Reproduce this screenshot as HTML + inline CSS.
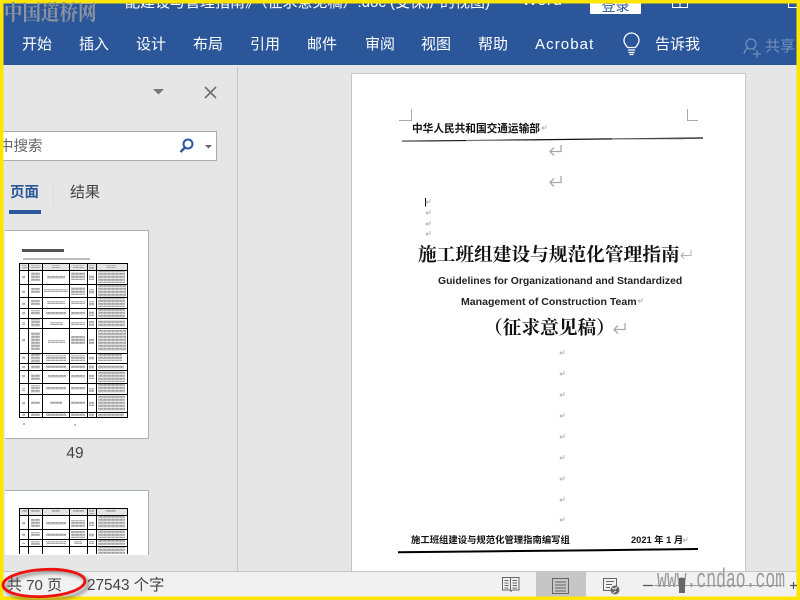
<!DOCTYPE html>
<html><head><meta charset="utf-8"><style>
html,body{margin:0;padding:0;width:800px;height:600px;overflow:hidden;background:#e6e6e6}
body{position:relative;font-family:"Liberation Sans","Noto Sans CJK SC",sans-serif}
.a{position:absolute;white-space:nowrap}
.tab{position:absolute;top:35px;font-size:15px;line-height:20px;color:#fff;white-space:nowrap}
.s{font-family:"Noto Serif CJK SC","Liberation Serif",serif;font-weight:700;color:#111}
svg{position:absolute;left:0;top:0}
</style></head><body>
<div class="a" style="left:0;top:0;width:800px;height:65px;background:#2b579a"></div>
<div class="a" style="left:125px;top:-7px;font-size:15px;line-height:20px;color:#fff">配建设与管理指南》（征求意见稿）.doc (受保护的视图)</div>
<div class="a" style="left:522px;top:-9px;font-size:16px;line-height:20px;letter-spacing:.6px;color:#fff">Word</div>
<div class="a" style="left:590px;top:0;width:51px;height:14px;background:#fff;border-radius:1px;overflow:hidden;text-align:center;font-size:14px;line-height:12px;color:#2b579a">登录</div>
<div class="tab" style="left:22px">开始</div><div class="tab" style="left:79px">插入</div><div class="tab" style="left:136px">设计</div><div class="tab" style="left:193px">布局</div><div class="tab" style="left:250px">引用</div><div class="tab" style="left:307px">邮件</div><div class="tab" style="left:365px">审阅</div><div class="tab" style="left:421px">视图</div><div class="tab" style="left:478px">帮助</div><div class="tab" style="left:535px;letter-spacing:1.1px">Acrobat</div><div class="tab" style="left:655px">告诉我</div><div class="tab" style="left:765px;color:#7391bd;top:37px">共享</div>

<!-- search pane -->
<div class="a" style="left:-10px;top:131px;width:225px;height:28px;background:#fff;border:1px solid #ababab"></div>
<div class="a" style="left:-1px;top:137px;font-size:14.5px;line-height:20px;color:#666">中搜索</div>
<div class="a" style="left:10px;top:183px;font-size:14.5px;line-height:20px;font-weight:700;color:#2b579a">页面</div>
<div class="a" style="left:9px;top:210px;width:32px;height:4px;background:#2b579a"></div>
<div class="a" style="left:53px;top:180px;width:1px;height:25px;background:#dcdcdc"></div>
<div class="a" style="left:70px;top:183px;font-size:15px;line-height:20px;color:#444">结果</div>
<div class="a" style="left:5px;top:230px;width:143px;height:207px;background:#fff;border:solid #abafb8;border-width:1px 1px 1px 0"></div>
<div class="a" style="left:5px;top:490px;width:143px;height:64px;background:#fff;border:solid #abafb8;border-width:1px 1px 0 0;overflow:hidden"></div>
<div class="a" style="left:50px;top:444px;width:50px;text-align:center;font-size:15.5px;line-height:20px;color:#444">49</div>
<div class="a" style="left:237px;top:67px;width:1px;height:504px;background:#c6c6c6"></div>

<!-- document page -->
<div class="a" style="left:351px;top:73px;width:393px;height:498px;background:#fff;border:1px solid #c6c6c6;border-bottom:0"></div>
<div class="a" style="left:412px;top:121px;font-size:10.67px;line-height:16px;font-weight:700;color:#111">中华人民共和国交通运输部</div>
<div class="a s" style="left:418px;top:241px;font-size:18.7px;line-height:26px">施工班组建设与规范化管理指南</div>
<div class="a" style="left:438px;top:275px;font-size:10.4px;line-height:14px;font-weight:700;color:#222">Guidelines for Organizationand and Standardized</div>
<div class="a" style="left:461px;top:295px;font-size:10.55px;line-height:14px;font-weight:700;color:#222">Management of Construction Team</div>
<div class="a s" style="left:484px;top:314px;font-size:18.7px;line-height:26px">（征求意见稿）</div>
<div class="a" style="left:411px;top:533px;font-size:9.35px;line-height:15px;font-weight:700;color:#111">施工班组建设与规范化管理指南编写组</div>
<div class="a" style="left:631px;top:533px;font-size:9.3px;line-height:15px;font-weight:700;color:#111">2021 年 1 月</div>

<!-- status bar -->
<div class="a" style="left:0;top:571px;width:800px;height:29px;background:#f1f1f1;border-top:1px solid #c6c6c6;box-sizing:border-box"></div>
<div class="a" style="left:536px;top:572px;width:50px;height:26px;background:#c6c6c6"></div>
<div class="a" style="left:7px;top:576px;font-size:15px;line-height:20px;color:#444">共 70 页</div>
<div class="a" style="left:87px;top:576px;font-size:15.3px;line-height:20px;color:#444">27543 个字</div>
<div class="a" style="left:657px;top:565px;font-family:'Liberation Mono',monospace;font-size:27px;line-height:32px;color:#9a9a9a;transform:scaleX(.608);transform-origin:0 50%">www.cndao.com</div>

<svg width="800" height="600" viewBox="0 0 800 600" fill="none">
<defs>
<filter id="b" x="-20%" y="-40%" width="140%" height="180%"><feGaussianBlur stdDeviation="1.6"/></filter>
<pattern id="t" width="4" height="3" patternUnits="userSpaceOnUse"><rect width="4" height="3" fill="#e4e4e4"/><rect width="4" height="1.700" fill="#a2a2a2"/><rect x="2.500" width="1" height="1.700" fill="#cfcfcf"/></pattern>
<g id="r"><path d="M11 0V5.500H1M4 2.500 1 5.500l3 3" stroke="#b0b0b0" stroke-width="1"/></g>
<g id="rb"><path d="M12 0V6.500H1M5 2.500 1 6.500l4 4" stroke="#a8a8a8" stroke-width="1.300"/></g>
<g id="rs"><path d="M5 0V3H1M2.500 1.500 1 3l1.500 1.500" stroke="#b5b5b5" stroke-width=".9"/></g>
</defs>
<!-- yellow border -->
<path d="M1.750 1.750H798.250V598.250H1.750Z" stroke="#ffe600" stroke-width="3.500"/>
<!-- close etc -->
<path d="M153 89h11l-5.500 5.500z" fill="#777"/>
<path d="M205 87l11 11M216 87l-11 11" stroke="#6e6e6e" stroke-width="1.600"/>
<circle cx="188" cy="144" r="4.500" stroke="#2b579a" stroke-width="2"/><path d="M184.500 148l-4 4" stroke="#2b579a" stroke-width="2.400"/>
<path d="M205 145h7l-3.500 3.500z" fill="#666"/>
<path d="M672.500 8V3M672.500 7.500h15V3M680 3v4" stroke="#fff"/>
<path d="M788.500 8V3M788.500 7.500H797" stroke="#fff"/>
<!-- bulb -->
<path d="M627.500 47.500c-1-2-3.500-3.500-3.500-7a7.500 7.500 0 0 1 15 0c0 3.500-2.500 5-3.500 7z" stroke="#fff" stroke-width="1.300"/><path d="M628 50h7M628.500 52.500h6M629.500 54.500h4" stroke="#fff" stroke-width="1.300"/>
<!-- person -->
<circle cx="751" cy="44" r="5" stroke="#6f8fbc" stroke-width="1.300"/><path d="M744 54c.8-4 2.500-5.500 4.500-6M753 49l2 .8M757 50v8M753 54h8" stroke="#6f8fbc" stroke-width="1.300"/>
<!-- doc marks -->
<path d="M399 120.500h12.500V109M687.500 109v11.500H698" stroke="#aaa"/>
<path d="M402 141.200l100-1 100-1.200 101-1" stroke="#111" stroke-width="1.200"/>
<path d="M402 141.500h27M466 140.500h70M612 139h72" stroke="#999" stroke-width=".8"/>
<use href="#rs" x="541" y="125"/>
<use href="#rb" x="549" y="145"/><use href="#rb" x="549" y="176"/>
<path d="M425.500 198v8.500" stroke="#000"/>
<use href="#rs" x="425" y="199"/><use href="#rs" x="425" y="210"/><use href="#rs" x="425" y="221"/><use href="#rs" x="425" y="231"/>
<use href="#r" x="680" y="250"/>
<use href="#rs" x="637" y="298"/><use href="#rb" x="613" y="323"/>
<use href="#rs" x="559" y="350"/><use href="#rs" x="559" y="371"/><use href="#rs" x="559" y="392"/><use href="#rs" x="559" y="413"/><use href="#rs" x="559" y="434"/><use href="#rs" x="559" y="455"/><use href="#rs" x="559" y="476"/><use href="#rs" x="559" y="497"/><use href="#rs" x="559" y="517"/>
<use href="#rs" x="682" y="537"/>
<path d="M398 552.200l100-1 100-1 100-1.200" stroke="#000" stroke-width="2"/>
<!-- thumb 1 -->
<rect x="22" y="249" width="42" height="3" fill="#555"/>
<rect x="23" y="258" width="67" height="2" fill="#bbb"/>
<rect x="19" y="263" width="109" height="7" fill="#e4e4e4"/>
<path d="M19 263.500h109M19 270.500h109M19 284.500h109M19 297.500h109M19 308.500h109M19 318.500h109M19 328.500h109M19 353.500h109M19 363.500h109M19 370.500h109M19 383.500h109M19 394.500h109M19 412.500h109M19 417.500h109M19.500 263v155M28.500 263v155M42.500 263v155M69.500 263v155M87.500 263v155M96.500 263v155M127.500 263v155" stroke="#000"/>
<g fill="url(#t)">
<path d="M22 265h5v3h-5zM31 265h9v3h-9zM52 265h8v3h-8zM73 265h11v3H73zM89 265h5v4h-5zM106 265h10v3h-10z"/>
<path d="M22 276h3v3h-3zM31 272h9v9h-9zM47 276h18v3H47zM71 272h14v8H71zM89 275h5v5h-5zM98 271h27v12H98z"/>
<path d="M22 290h3v3h-3zM31 288h9v5h-9zM44 289h24v3H44zM71 287h14v8H71zM89 289h5v5h-5zM98 285h28v12H98z"/>
<path d="M22 302h3v3h-3zM31 300h9v5h-9zM47 301h18v3H47zM71 301h14v3H71zM89 301h5v5h-5zM98 298h27v9H98z"/>
<path d="M22 312h3v3h-3zM31 310h9v5h-9zM46 312h20v3H46zM71 312h14v3H71zM89 311h5v5h-5zM98 309h27v9H98z"/>
<path d="M22 322h3v3h-3zM31 319h9v8h-9zM50 322h13v3H50zM71 322h14v3H71zM89 321h5v5h-5zM98 320h27v7H98z"/>
<path d="M22 339h3v3h-3zM31 332h9v18h-9zM48 340h17v3H48zM71 336h14v8H71zM89 339h5v5h-5zM98 330h28v21H98z"/>
<path d="M22 356h3v3h-3zM31 354h9v9h-9zM46 355h20v6H46zM71 355h14v6H71zM89 357h5v3h-5zM98 354h24v7H98z"/>
<path d="M22 366h3v2h-3zM31 365h9v4h-9zM46 365h20v3H46zM71 365h14v3H71zM89 365h5v4h-5zM98 365h26v4H98z"/>
<path d="M22 375h3v3h-3zM31 374h9v6h-9zM48 375h18v3H48zM71 375h14v3H71zM89 375h5v4h-5zM98 371h27v11H98z"/>
<path d="M22 388h3v3h-3zM31 385h9v8h-9zM46 387h20v3H46zM71 387h14v3H71zM89 388h5v4h-5zM98 384h27v9H98z"/>
<path d="M22 402h3v3h-3zM31 401h9v3h-9zM50 401h12v3H50zM71 401h14v3H71zM89 402h5v4h-5zM98 395h27v16H98z"/>
<path d="M22 413h3v3h-3zM31 413h9v3h-9zM46 413h20v3H46zM71 413h14v3H71zM89 413h5v4h-5zM98 413h26v4H98z"/>
</g>
<rect x="23" y="423" width="2" height="2" fill="#bbb"/><rect x="74" y="424" width="2" height="2" fill="#bbb"/>
<!-- thumb 2 -->
<rect x="19" y="508" width="109" height="7" fill="#e4e4e4"/>
<path d="M19 508.500h109M19 515.500h109M19 529.500h109M19 539.500h109M19 546.500h109M19.500 508v46M28.500 508v46M42.500 508v46M69.500 508v46M87.500 508v46M96.500 508v46M127.500 508v46" stroke="#000"/>
<g fill="url(#t)"><path d="M22 510h5v3h-5zM31 510h9v3h-9zM52 510h8v3h-8zM73 510h11v3H73zM89 510h5v4h-5zM106 510h10v3h-10z"/>
<path d="M22 522h3v3h-3zM31 519h9v8h-9zM46 522h20v3H46zM71 520h14v7H71zM89 522h5v4h-5zM98 516h27v12H98z"/>
<path d="M22 533h3v3h-3zM31 532h9v4h-9zM46 533h20v3H46zM71 531h14v7H71zM89 533h5v4h-5zM98 530h27v8H98z"/>
<path d="M22 542h3v2h-3zM31 541h9v4h-9zM46 541h20v3H46zM74 541h8v3h-8zM89 541h5v3h-5zM98 540h27v5H98zM98 547h27v7H98z"/></g>
<!-- status icons -->
<path d="M502.500 577.500h16.500v12.500h-7l-1 1.500-1-1.500h-7.500zM510.500 578v12M504.500 580.500h4M504.500 583h4M504.500 585.500h4M504.500 588h4M512.500 580.500h4.500M512.500 583h4.500M512.500 585.500h4.500M512.500 588h4.500" stroke="#666"/>
<path d="M552.500 578.500h16v15h-16zM555 582h11M555 585h11M555 588h11M555 591h11" stroke="#666"/>
<path d="M603.500 578.500h13v12h-13zM606 581.500h8M606 584.500h6M606 587.500h4" stroke="#666"/>
<circle cx="615" cy="590" r="4.500" fill="#666"/><path d="M612 588l3 1 2-2M613 593l3-2" stroke="#eee"/>
<path d="M643 585.500h10M790 585.500h7M793.500 582v7" stroke="#555" stroke-width="1.200"/>
<path d="M654 585.500h128" stroke="#9a9a9a"/>
<rect x="679" y="578" width="6" height="15" fill="#666"/>
<!-- red ellipse -->
<ellipse cx="44" cy="583" rx="41" ry="14" stroke="#555" stroke-width="3.500" opacity=".55" filter="url(#b)" transform="translate(3 3) rotate(-3 44 583)"/>
<ellipse cx="44" cy="583" rx="41" ry="13.500" stroke="#f01010" stroke-width="2.800" transform="rotate(-3 44 583)"/>
</svg>
<div class="a" style="left:4px;top:-1px;font-family:'Noto Serif CJK SC','Liberation Serif',serif;font-size:18.500px;font-weight:700;line-height:27px;color:#8d94a0;transform:scaleY(1.15);transform-origin:0 50%">中国道桥网</div>
</body></html>
